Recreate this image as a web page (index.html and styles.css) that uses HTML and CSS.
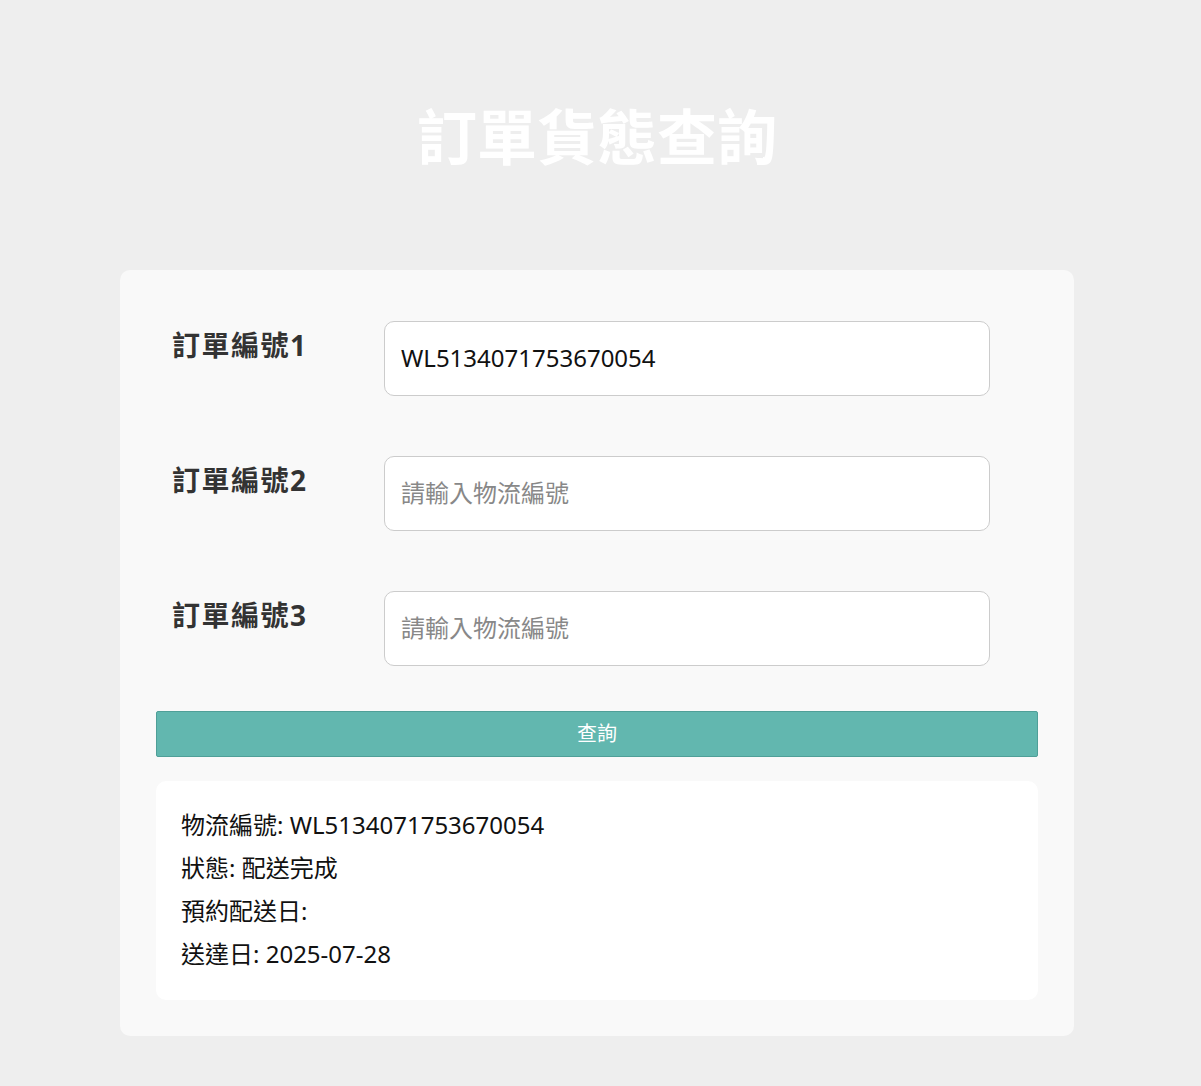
FILE: index.html
```html
<!DOCTYPE html>
<html lang="zh-TW">
  <head>
    <meta charset="UTF-8" />
    <meta name="viewport" content="width=device-width, initial-scale=1.0" />
    <title>訂單貨態查詢</title>
    <link rel="stylesheet" href="styles.css">
  </head>
  <body>
    <h1>訂單貨態查詢</h1>

    <main class="card">
      <div class="form-group">
        <label for="order1">訂單編號1</label>
        <input id="order1" type="text" value="WL5134071753670054" placeholder="請輸入物流編號" />
      </div>
      <div class="form-group">
        <label for="order2">訂單編號2</label>
        <input id="order2" type="text" placeholder="請輸入物流編號" />
      </div>
      <div class="form-group">
        <label for="order3">訂單編號3</label>
        <input id="order3" type="text" placeholder="請輸入物流編號" />
      </div>

      <button class="btn-query">查詢</button>

      <div class="result">
        <p>物流編號: WL5134071753670054</p>
        <p>狀態: 配送完成</p>
        <p>預約配送日:</p>
        <p>送達日: 2025-07-28</p>
      </div>
    </main>
  </body>
</html>
```

FILE: styles.css
```css
:root {
  --fundo: #eeeeee;
  --card: #f9f9f9;
  --verde: #62b7af;
  --texto: #333333;
}

* {
  margin: 0;
  padding: 0;
  box-sizing: border-box;
}

body {
  font-family: "Noto Sans", "Noto Sans CJK TC", sans-serif;
  background-color: var(--fundo);
  color: #111;
  min-height: 100vh;
  padding-right: 7px;
  padding-bottom: 50px;
}

h1 {
  font-family: "Noto Sans CJK TC", sans-serif;
  text-align: center;
  color: #ffffff;
  font-size: 60px;
  font-weight: 700;
  line-height: 72px;
  padding-top: 98px;
  margin-bottom: 100px;
}

.card {
  width: 954px;
  margin: 0 auto;
  background-color: var(--card);
  border-radius: 10px;
  padding: 51px 36px 36px;
}

/* linhas do formulário */
.form-group {
  display: flex;
  align-items: flex-start;
  padding-left: 16px;
  margin-bottom: 60px;
}

.form-group:nth-of-type(3) {
  margin-bottom: 45px;
}

.form-group label {
  width: 212px;
  font-size: 28px;
  font-weight: 700;
  line-height: 40px;
  letter-spacing: 1.5px;
  padding-top: 4px;
  color: var(--texto);
}

.form-group input {
  width: 606px;
  height: 75px;
  border: 1px solid #cccccc;
  border-radius: 10px;
  background: #ffffff;
  padding: 0 16px 3px;
  font-family: inherit;
  font-size: 24px;
  color: #111;
  outline: none;
}

.form-group input::placeholder {
  color: #888888;
}

.btn-query {
  display: block;
  width: 100%;
  height: 46px;
  background-color: var(--verde);
  border: 1px solid #4f9f98;
  border-radius: 2px;
  color: #ffffff;
  font-family: inherit;
  font-size: 20px;
  padding-bottom: 4px;
  cursor: pointer;
  margin-bottom: 24px;
}

.btn-query:hover {
  background-color: #53a69e;
}

.result {
  background-color: #ffffff;
  border-radius: 10px;
  padding: 22px 25px 25px;
}

.result p {
  font-size: 24px;
  line-height: 43px;
}
```
